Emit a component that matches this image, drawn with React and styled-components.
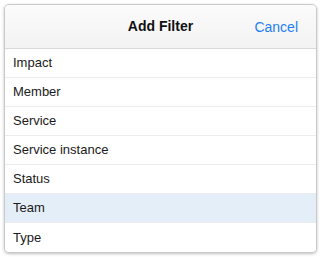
import styled, { createGlobalStyle } from "styled-components";

const GlobalStyle = createGlobalStyle`
  html, body {
    margin: 0;
    padding: 0;
    background: #ffffff;
    font-family: "Liberation Sans", Arial, sans-serif;
  }
`;

const options = [
  "Impact",
  "Member",
  "Service",
  "Service instance",
  "Status",
  "Team",
  "Type",
];

export default function App() {
  return (
    <>
      <GlobalStyle />
      <Page>
        <Panel>
          <Header>
            <Title>Add Filter</Title>
            <CancelButton>Cancel</CancelButton>
          </Header>
          <List>
            {options.map((name) => (
              <Row key={name} $active={name === "Team"}>
                {name}
              </Row>
            ))}
          </List>
        </Panel>
      </Page>
    </>
  );
}

const Page = styled.div`
  padding: 4px 5px 6px 4px;
`;

const Panel = styled.div`
  width: 311px;
  border: 1px solid #c9c9c9;
  border-radius: 5px;
  background: #fff;
  box-shadow: 0 1px 3px rgba(0, 0, 0, 0.25);
  overflow: hidden;
`;

const Header = styled.div`
  position: relative;
  height: 42px;
  padding-bottom: 1px;
  display: flex;
  align-items: center;
  justify-content: center;
  background: linear-gradient(#fbfbfb, #f3f3f3);
  border-bottom: 1px solid #d9d9d9;
`;

const Title = styled.div`
  font-size: 14px;
  font-weight: bold;
  color: #111;
`;

const CancelButton = styled.button`
  position: absolute;
  right: 18px;
  top: 50%;
  transform: translateY(-50%);
  border: none;
  background: none;
  padding: 0;
  font-family: inherit;
  font-size: 14px;
  color: #1f80ef;
  cursor: pointer;
`;

const List = styled.div`
  display: flex;
  flex-direction: column;
`;

const Row = styled.div`
  height: 28px;
  display: flex;
  align-items: center;
  padding-left: 8px;
  padding-bottom: 1px;
  box-sizing: border-box;
  height: 29px;
  font-size: 13px;
  color: #1a1a1a;
  background: ${(p) => (p.$active ? "#e4eef8" : "#fff")};
  border-bottom: 1px solid #ececec;

  &:last-child {
    border-bottom: none;
  }
`;
